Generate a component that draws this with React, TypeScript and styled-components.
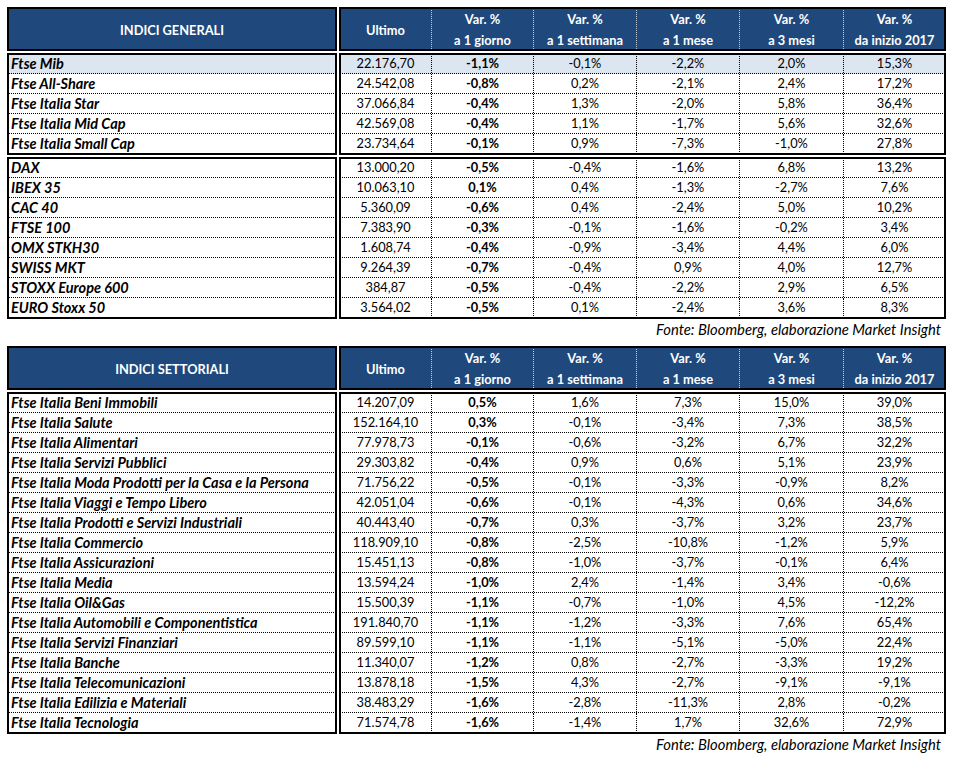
import styled, { createGlobalStyle } from "styled-components";

type Row = {
    name: string;
    last: string;
    d1: string;
    w1: string;
    m1: string;
    m3: string;
    ytd: string;
    highlight?: boolean;
};

const GlobalStyle = createGlobalStyle`
    html, body {
        margin: 0;
        padding: 0;
        background: #ffffff;
    }
    body {
        font-family: Lato, "Open Sans", sans-serif;
        color: #000000;
    }
`;

const COLS = "92px 102px 103px 103px 104px 101px";

const Page = styled.div`
    padding: 8px 0 0 8px;
    width: 937px;
`;

const TableGrid = styled.div`
    display: grid;
    grid-template-columns: 328px 605px;
    column-gap: 4px;
    row-gap: 4px;
`;

const HeaderBox = styled.div`
    height: 42px;
    background: #1f497d;
    outline: 2px solid #000;
    outline-offset: -1px;
    color: #ffffff;
    font-weight: 700;
    font-size: 12.8px;
`;

const TitleBox = styled(HeaderBox)`
    display: flex;
    align-items: center;
    justify-content: center;
    padding-top: 1px;
    box-sizing: border-box;
`;

const HeaderCols = styled(HeaderBox)`
    display: grid;
    grid-template-columns: ${COLS};
`;

const HeaderCell = styled.div`
    display: flex;
    flex-direction: column;
    align-items: center;
    justify-content: center;
    padding-top: 1px;
    line-height: 21px;
    box-sizing: border-box;
    border-right: 1px dotted rgba(255, 255, 255, 0.75);
    &:last-child {
        border-right: none;
    }
`;

const Box = styled.div`
    outline: 2px solid #000;
    outline-offset: -1px;
    background: #ffffff;
`;

const NameRow = styled.div<{ $hl?: boolean }>`
    height: 20px;
    box-sizing: border-box;
    padding-left: 3px;
    line-height: 19px;
    font-size: 14.5px;
    font-weight: 700;
    font-style: italic;
    white-space: nowrap;
    background: ${(p) => (p.$hl ? "#dce6f1" : "transparent")};
    border-bottom: 1px dotted #000;
    &:last-child {
        border-bottom: none;
    }
`;

const DataRow = styled.div<{ $hl?: boolean }>`
    display: grid;
    grid-template-columns: ${COLS};
    height: 20px;
    box-sizing: border-box;
    background: ${(p) => (p.$hl ? "#dce6f1" : "transparent")};
    border-bottom: 1px dotted #000;
    &:last-child {
        border-bottom: none;
    }
`;

const Cell = styled.div<{ $bold?: boolean }>`
    text-align: center;
    line-height: 19px;
    font-size: 12.8px;
    font-weight: ${(p) => (p.$bold ? 700 : 400)};
    border-right: 1px dotted #000;
    &:last-child {
        border-right: none;
    }
`;

const Source = styled.div<{ $gap: number }>`
    height: 22px;
    line-height: 22px;
    text-align: right;
    padding-right: 4px;
    font-size: 14.8px;
    font-style: italic;
    margin-bottom: ${(p) => p.$gap}px;
`;

const generali: Row[][] = [
    [
        { name: "Ftse Mib", last: "22.176,70", d1: "-1,1%", w1: "-0,1%", m1: "-2,2%", m3: "2,0%", ytd: "15,3%", highlight: true },
        { name: "Ftse All-Share", last: "24.542,08", d1: "-0,8%", w1: "0,2%", m1: "-2,1%", m3: "2,4%", ytd: "17,2%" },
        { name: "Ftse Italia Star", last: "37.066,84", d1: "-0,4%", w1: "1,3%", m1: "-2,0%", m3: "5,8%", ytd: "36,4%" },
        { name: "Ftse Italia Mid Cap", last: "42.569,08", d1: "-0,4%", w1: "1,1%", m1: "-1,7%", m3: "5,6%", ytd: "32,6%" },
        { name: "Ftse Italia Small Cap", last: "23.734,64", d1: "-0,1%", w1: "0,9%", m1: "-7,3%", m3: "-1,0%", ytd: "27,8%" },
    ],
    [
        { name: "DAX", last: "13.000,20", d1: "-0,5%", w1: "-0,4%", m1: "-1,6%", m3: "6,8%", ytd: "13,2%" },
        { name: "IBEX 35", last: "10.063,10", d1: "0,1%", w1: "0,4%", m1: "-1,3%", m3: "-2,7%", ytd: "7,6%" },
        { name: "CAC 40", last: "5.360,09", d1: "-0,6%", w1: "0,4%", m1: "-2,4%", m3: "5,0%", ytd: "10,2%" },
        { name: "FTSE 100", last: "7.383,90", d1: "-0,3%", w1: "-0,1%", m1: "-1,6%", m3: "-0,2%", ytd: "3,4%" },
        { name: "OMX STKH30", last: "1.608,74", d1: "-0,4%", w1: "-0,9%", m1: "-3,4%", m3: "4,4%", ytd: "6,0%" },
        { name: "SWISS MKT", last: "9.264,39", d1: "-0,7%", w1: "-0,4%", m1: "0,9%", m3: "4,0%", ytd: "12,7%" },
        { name: "STOXX Europe 600", last: "384,87", d1: "-0,5%", w1: "-0,4%", m1: "-2,2%", m3: "2,9%", ytd: "6,5%" },
        { name: "EURO Stoxx 50", last: "3.564,02", d1: "-0,5%", w1: "0,1%", m1: "-2,4%", m3: "3,6%", ytd: "8,3%" },
    ],
];

const settoriali: Row[][] = [
    [
        { name: "Ftse Italia Beni Immobili", last: "14.207,09", d1: "0,5%", w1: "1,6%", m1: "7,3%", m3: "15,0%", ytd: "39,0%" },
        { name: "Ftse Italia Salute", last: "152.164,10", d1: "0,3%", w1: "-0,1%", m1: "-3,4%", m3: "7,3%", ytd: "38,5%" },
        { name: "Ftse Italia Alimentari", last: "77.978,73", d1: "-0,1%", w1: "-0,6%", m1: "-3,2%", m3: "6,7%", ytd: "32,2%" },
        { name: "Ftse Italia Servizi Pubblici", last: "29.303,82", d1: "-0,4%", w1: "0,9%", m1: "0,6%", m3: "5,1%", ytd: "23,9%" },
        { name: "Ftse Italia Moda Prodotti per la Casa e la Persona", last: "71.756,22", d1: "-0,5%", w1: "-0,1%", m1: "-3,3%", m3: "-0,9%", ytd: "8,2%" },
        { name: "Ftse Italia Viaggi e Tempo Libero", last: "42.051,04", d1: "-0,6%", w1: "-0,1%", m1: "-4,3%", m3: "0,6%", ytd: "34,6%" },
        { name: "Ftse Italia Prodotti e Servizi Industriali", last: "40.443,40", d1: "-0,7%", w1: "0,3%", m1: "-3,7%", m3: "3,2%", ytd: "23,7%" },
        { name: "Ftse Italia Commercio", last: "118.909,10", d1: "-0,8%", w1: "-2,5%", m1: "-10,8%", m3: "-1,2%", ytd: "5,9%" },
        { name: "Ftse Italia Assicurazioni", last: "15.451,13", d1: "-0,8%", w1: "-1,0%", m1: "-3,7%", m3: "-0,1%", ytd: "6,4%" },
        { name: "Ftse Italia Media", last: "13.594,24", d1: "-1,0%", w1: "2,4%", m1: "-1,4%", m3: "3,4%", ytd: "-0,6%" },
        { name: "Ftse Italia Oil&Gas", last: "15.500,39", d1: "-1,1%", w1: "-0,7%", m1: "-1,0%", m3: "4,5%", ytd: "-12,2%" },
        { name: "Ftse Italia Automobili e Componentistica", last: "191.840,70", d1: "-1,1%", w1: "-1,2%", m1: "-3,3%", m3: "7,6%", ytd: "65,4%" },
        { name: "Ftse Italia Servizi Finanziari", last: "89.599,10", d1: "-1,1%", w1: "-1,1%", m1: "-5,1%", m3: "-5,0%", ytd: "22,4%" },
        { name: "Ftse Italia Banche", last: "11.340,07", d1: "-1,2%", w1: "0,8%", m1: "-2,7%", m3: "-3,3%", ytd: "19,2%" },
        { name: "Ftse Italia Telecomunicazioni", last: "13.878,18", d1: "-1,5%", w1: "4,3%", m1: "-2,7%", m3: "-9,1%", ytd: "-9,1%" },
        { name: "Ftse Italia Edilizia e Materiali", last: "38.483,29", d1: "-1,6%", w1: "-2,8%", m1: "-11,3%", m3: "2,8%", ytd: "-0,2%" },
        { name: "Ftse Italia Tecnologia", last: "71.574,78", d1: "-1,6%", w1: "-1,4%", m1: "1,7%", m3: "32,6%", ytd: "72,9%" },
    ],
];

const headers: [string, string][] = [
    ["Var. %", "a 1 giorno"],
    ["Var. %", "a 1 settimana"],
    ["Var. %", "a 1 mese"],
    ["Var. %", "a 3 mesi"],
    ["Var. %", "da inizio 2017"],
];

function IndexTable({ title, groups }: { title: string; groups: Row[][] }) {
    return (
        <TableGrid>
            <TitleBox>{title}</TitleBox>
            <HeaderCols>
                <HeaderCell>Ultimo</HeaderCell>
                {headers.map(([a, b]) => (
                    <HeaderCell key={b}>
                        <span>{a}</span>
                        <span>{b}</span>
                    </HeaderCell>
                ))}
            </HeaderCols>
            {groups.map((rows, gi) => [
                <Box key={`n${gi}`}>
                    {rows.map((r) => (
                        <NameRow key={r.name} $hl={r.highlight}>
                            {r.name}
                        </NameRow>
                    ))}
                </Box>,
                <Box key={`d${gi}`}>
                    {rows.map((r) => (
                        <DataRow key={r.name} $hl={r.highlight}>
                            <Cell>{r.last}</Cell>
                            <Cell $bold>{r.d1}</Cell>
                            <Cell>{r.w1}</Cell>
                            <Cell>{r.m1}</Cell>
                            <Cell>{r.m3}</Cell>
                            <Cell>{r.ytd}</Cell>
                        </DataRow>
                    ))}
                </Box>,
            ])}
        </TableGrid>
    );
}

export default function App() {
    return (
        <Page>
            <GlobalStyle />
            <IndexTable title="INDICI GENERALI" groups={generali} />
            <Source $gap={7}>Fonte: Bloomberg, elaborazione Market Insight</Source>
            <IndexTable title="INDICI SETTORIALI" groups={settoriali} />
            <Source $gap={0}>Fonte: Bloomberg, elaborazione Market Insight</Source>
        </Page>
    );
}
